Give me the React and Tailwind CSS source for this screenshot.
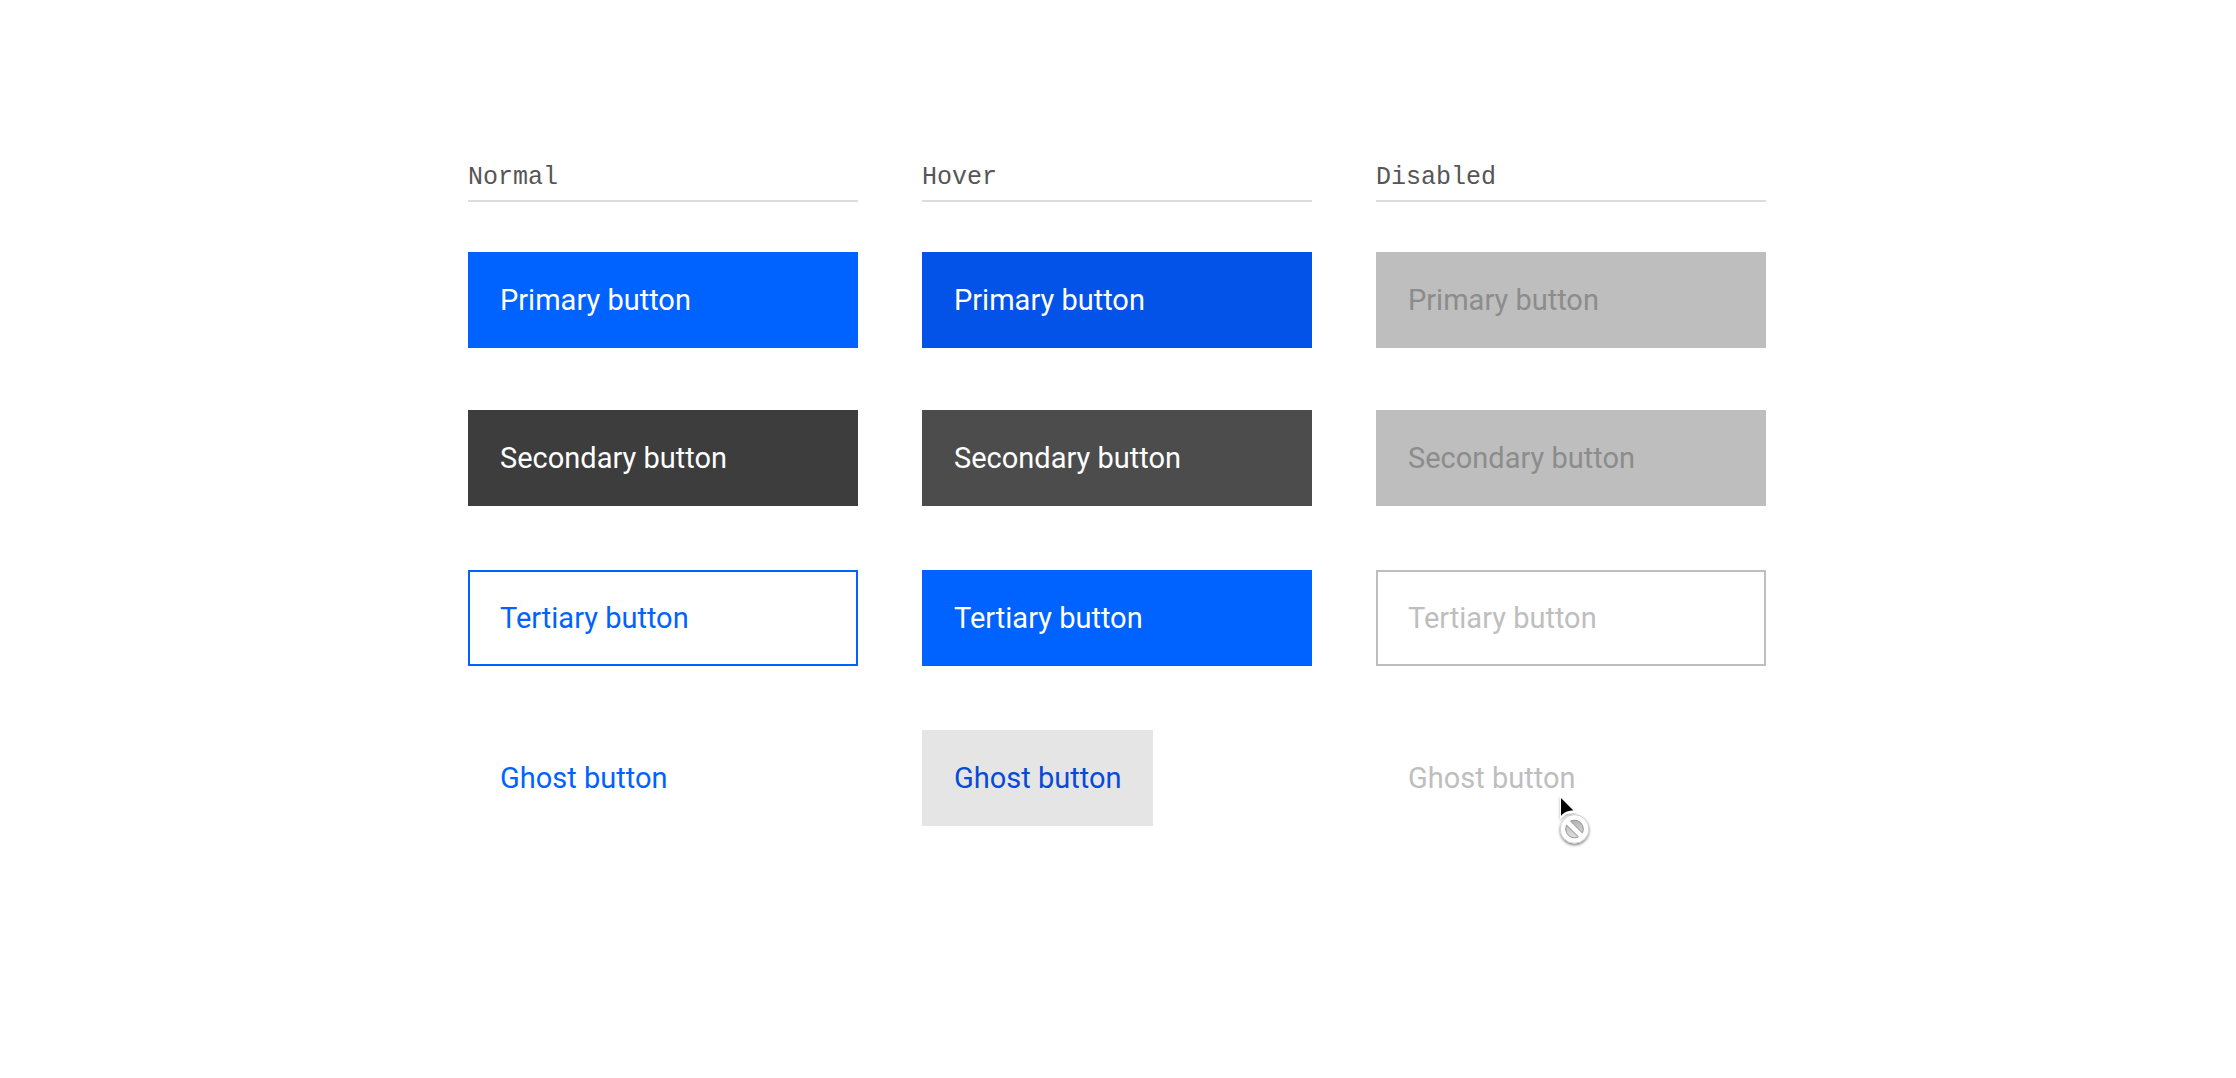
const columns = [
  {
    title: "Normal",
    primary: "bg-[#0062ff] text-white",
    secondary: "bg-[#3d3d3d] text-white",
    tertiary: "border-2 border-[#0062ff] px-[30px] text-[#0062ff]",
    ghost: "text-[#0062ff]",
  },
  {
    title: "Hover",
    primary: "bg-[#0353e9] text-white",
    secondary: "bg-[#4c4c4c] text-white",
    tertiary: "bg-[#0062ff] px-8 text-white",
    ghost: "bg-[#e5e5e5] text-[#054ada]",
  },
  {
    title: "Disabled",
    disabled: true,
    primary: "bg-[#bebebe] text-[#8c8c8c]",
    secondary: "bg-[#bebebe] text-[#8c8c8c]",
    tertiary: "border-2 border-[#bebebe] px-[30px] text-[#bebebe]",
    ghost: "text-[#bebebe]",
  },
];

function Button({ className, disabled, children }) {
  return (
    <button
      type="button"
      disabled={disabled}
      className={`flex h-24 items-center text-left text-[29px] leading-9 font-normal whitespace-nowrap ${className}`}
    >
      {children}
    </button>
  );
}

function NotAllowedCursor() {
  return (
    <svg
      aria-hidden="true"
      viewBox="0 0 40 56"
      className="absolute top-16 left-45 h-14 w-10 overflow-visible"
    >
      <defs>
        <filter id="cursor-shadow" x="-30%" y="-30%" width="160%" height="170%">
          <feDropShadow dx="0" dy="1.5" stdDeviation="1.4" floodOpacity="0.6" />
        </filter>
        <linearGradient id="sign-fill" x1="0" y1="0" x2="0" y2="1">
          <stop offset="0" stopColor="#b4b4b4" />
          <stop offset="1" stopColor="#e0e0e0" />
        </linearGradient>
      </defs>
      <path
        d="M4 1.5 L20.5 18.5 L10 20 L4 25 Z"
        fill="#fff"
        filter="url(#cursor-shadow)"
        opacity="0.5"
      />
      <path d="M5 4 L17.5 16.5 C12 16.5 8 18 5 22 Z" fill="#000" />
      <circle cx="18.5" cy="35" r="14.3" fill="#fff" filter="url(#cursor-shadow)" />
      <circle cx="18.5" cy="35" r="14.3" fill="#fff" stroke="#c4c4c4" strokeWidth="0.8" />
      <circle cx="18.5" cy="35" r="8.8" fill="url(#sign-fill)" stroke="#949494" strokeWidth="1" />
      <path d="M13 29.5 L24 40.5" stroke="#949494" strokeWidth="6.4" />
      <path d="M11 27.5 L26 42.5" stroke="#fff" strokeWidth="4.6" />
    </svg>
  );
}

function Column({ title, disabled, primary, secondary, tertiary, ghost }) {
  return (
    <section className="flex flex-col">
      <h2 className="border-b-2 border-[#dcdcdc] pb-1.5 font-['Liberation_Mono',monospace] text-[25px] leading-8 text-[#565656]">
        {title}
      </h2>
      <Button disabled={disabled} className={`mt-[50px] px-8 ${primary}`}>
        Primary button
      </Button>
      <Button disabled={disabled} className={`mt-[62px] px-8 ${secondary}`}>
        Secondary button
      </Button>
      <Button disabled={disabled} className={`mt-16 ${tertiary}`}>
        Tertiary button
      </Button>
      <div className="relative mt-16 self-start">
        <Button disabled={disabled} className={`px-8 ${ghost}`}>
          Ghost button
        </Button>
        {disabled && <NotAllowedCursor />}
      </div>
    </section>
  );
}

export default function App() {
  return (
    <main className="min-h-screen bg-white pt-[162px] font-['Roboto',sans-serif]">
      <div className="mx-auto grid max-w-[1300px] grid-cols-3 gap-16 pr-0.5">
        {columns.map((column) => (
          <Column key={column.title} {...column} />
        ))}
      </div>
    </main>
  );
}
